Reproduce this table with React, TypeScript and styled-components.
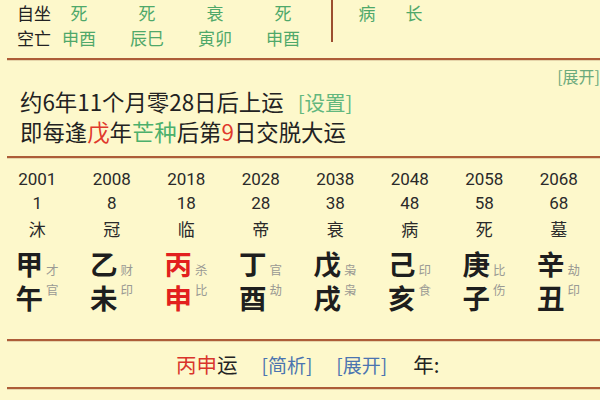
import React from "react";
import styled, { createGlobalStyle } from "styled-components";

const Global = createGlobalStyle`
  html, body { margin: 0; padding: 0; background: #fdf8cb; }
  body { font-family: "Noto Sans CJK SC", "Noto Sans", sans-serif; color: #222; overflow: hidden; }
`;

const Page = styled.div`
  width: 600px;
  height: 400px;
  background: #fdf8cb;
  overflow: hidden;
`;

const Rule = styled.div`
  height: 2px;
  margin-left: 7px;
  background: #ad5d38;
  box-shadow: 0 0.5px 0 rgba(120, 50, 20, 0.35);
`;

/* ---------- top ---------- */
const Top = styled.div`
  display: flex;
  align-items: flex-start;
  height: 58px;
`;

const TopGrid = styled.div<{ $cols: string; $pad: number }>`
  display: grid;
  grid-template-columns: ${(p) => p.$cols};
  grid-auto-rows: 25px;
  padding-left: ${(p) => p.$pad}px;
  font-size: 17px;
  line-height: 25px;
`;

const Label = styled.span`
  color: #222;
  white-space: nowrap;
`;

const Val = styled.span`
  width: 36px;
  text-align: center;
  color: #4fa86a;
  white-space: nowrap;
`;

const VDivider = styled.div`
  width: 2px;
  height: 42px;
  background: #9c4e30;
`;

/* ---------- start info ---------- */
const Info = styled.div`
  height: 96px;
  padding-left: 20px;
`;

const Expand = styled.div`
  display: flex;
  justify-content: flex-end;
  padding-top: 5px;
  height: 27px;
  box-sizing: border-box;
  font-size: 16px;
  line-height: 22px;
  color: #6aa97b;
`;

const InfoLine = styled.div`
  font-size: 22.4px;
  line-height: 29px;
  color: #222;
  white-space: nowrap;
`;

const C = styled.span<{ $c: string }>`
  color: ${(p) => p.$c};
`;

const Link = styled.span<{ $c: string; $size: number }>`
  color: ${(p) => p.$c};
  font-size: ${(p) => p.$size}px;
`;

/* ---------- columns ---------- */
const Cols = styled.div`
  display: grid;
  grid-template-columns: repeat(8, 74.5px);
  height: 181px;
  padding-top: 9px;
  box-sizing: border-box;
`;

const Col = styled.div`
  display: flex;
  flex-direction: column;
  align-items: center;
`;

const Num = styled.div`
  font-family: "Roboto", "Noto Sans CJK SC", sans-serif;
  font-size: 17px;
  line-height: 24px;
  color: #2a2a2a;
`;

const Stage = styled.div`
  font-size: 17px;
  line-height: 28px;
  color: #2a2a2a;
`;

const Pillar = styled.div<{ $align: string }>`
  display: flex;
  align-items: ${(p) => p.$align};
`;

const Big = styled.span<{ $red?: boolean }>`
  font-size: 27.5px;
  font-weight: 700;
  line-height: 28px;
  color: ${(p) => (p.$red ? "#e2201e" : "#1e1e1e")};
`;

const Small = styled.span`
  font-size: 12.5px;
  line-height: 14px;
  color: #9a9a94;
  margin-left: 3px;
  width: 13px;
`;

const StemRow = styled(Pillar)`
  margin-top: 4px;
  height: 30px;
`;

const BranchRow = styled(Pillar)`
  margin-top: 6px;
  height: 30px;
`;

/* ---------- bottom ---------- */
const Bottom = styled.div`
  display: flex;
  align-items: center;
  height: 46px;
  padding-left: 176px;
  font-size: 20.5px;
  white-space: nowrap;
`;

const Gap = styled.span<{ $w: number }>`
  display: inline-block;
  width: ${(p) => p.$w}px;
`;

const cols = [
  { y: "2001", a: "1", s: "沐", g: "甲", gs: "才", z: "午", zs: "官" },
  { y: "2008", a: "8", s: "冠", g: "乙", gs: "财", z: "未", zs: "印" },
  { y: "2018", a: "18", s: "临", g: "丙", gs: "杀", z: "申", zs: "比", red: true },
  { y: "2028", a: "28", s: "帝", g: "丁", gs: "官", z: "酉", zs: "劫" },
  { y: "2038", a: "38", s: "衰", g: "戊", gs: "枭", z: "戌", zs: "枭" },
  { y: "2048", a: "48", s: "病", g: "己", gs: "印", z: "亥", zs: "食" },
  { y: "2058", a: "58", s: "死", g: "庚", gs: "比", z: "子", zs: "伤" },
  { y: "2068", a: "68", s: "墓", g: "辛", gs: "劫", z: "丑", zs: "印" },
];

export default function App() {
  return (
    <Page>
      <Global />
      <Top>
        <TopGrid $cols="44px 68px 68px 68px 66px" $pad={17}>
          <Label>自坐</Label>
          <Val>死</Val>
          <Val>死</Val>
          <Val>衰</Val>
          <Val>死</Val>
          <Label>空亡</Label>
          <Val>申酉</Val>
          <Val>辰巳</Val>
          <Val>寅卯</Val>
          <Val>申酉</Val>
        </TopGrid>
        <VDivider />
        <TopGrid $cols="47px 47px" $pad={16}>
          <Val>病</Val>
          <Val>长</Val>
        </TopGrid>
      </Top>
      <Rule />
      <Info>
        <Expand>[展开]</Expand>
        <InfoLine>
          约6年11个月零28日后上运<Gap $w={14} />
          <Link $c="#62b77e" $size={20.5}>[设置]</Link>
        </InfoLine>
        <InfoLine>
          即每逢<C $c="#e0392c">戊</C>年<C $c="#4cb06c">芒种</C>后第<C $c="#e0392c">9</C>日交脱大运
        </InfoLine>
      </Info>
      <Rule />
      <Cols>
        {cols.map((c) => (
          <Col key={c.y}>
            <Num>{c.y}</Num>
            <Num>{c.a}</Num>
            <Stage>{c.s}</Stage>
            <StemRow $align="flex-end">
              <Big $red={c.red}>{c.g}</Big>
              <Small>{c.gs}</Small>
            </StemRow>
            <BranchRow $align="flex-start">
              <Big $red={c.red}>{c.z}</Big>
              <Small>{c.zs}</Small>
            </BranchRow>
          </Col>
        ))}
      </Cols>
      <Rule />
      <Bottom>
        <C $c="#d9342b">丙申</C>运
        <Gap $w={24} />
        <Link $c="#4b74b0" $size={19}>[简析]</Link>
        <Gap $w={24} />
        <Link $c="#4b74b0" $size={19}>[展开]</Link>
        <Gap $w={26} />
        年:
      </Bottom>
      <Rule />
    </Page>
  );
}
